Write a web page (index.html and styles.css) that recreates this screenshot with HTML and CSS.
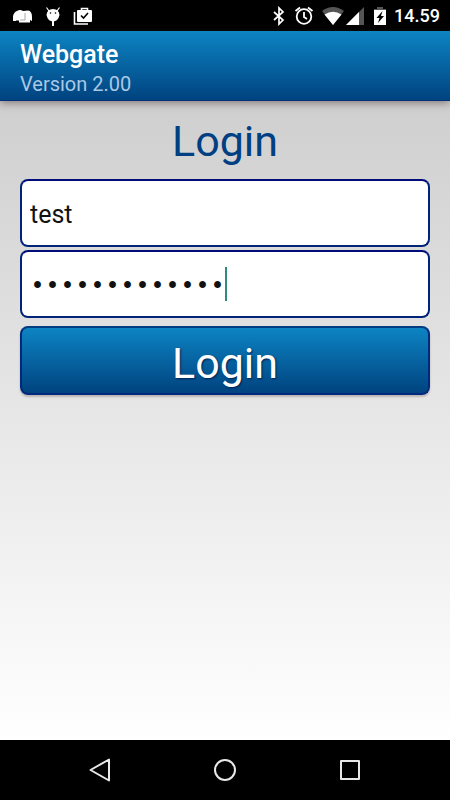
FILE: index.html
```html
<!DOCTYPE html>
<html lang="en">
<head>
  <meta charset="utf-8">
  <meta name="viewport" content="width=device-width, initial-scale=1">
  <title>Webgate</title>
  <link rel="stylesheet" href="styles.css">
</head>
<body>
  <div class="status">
    <svg width="20" height="20" viewBox="0 0 20 20" aria-hidden="true">
      <path d="M0 15Q-1 7 4 5Q7 3 10 5L15 4.500Q19 5 19 11V15L17 14V16.500H6V14.500H3V15Z" fill="#fff"/>
      <path d="M12 7V14H7" fill="none" stroke="#aaa"/>
    </svg>
    <svg width="20" height="20" viewBox="0 0 20 20" aria-hidden="true">
      <path d="M3.500 1.500L6 5M16.500 1.500L14 5" stroke="#fff" stroke-width="1.200"/>
      <path d="M3.500 9Q4 3 10 3T16.500 9Q15 15.500 10 15.500T3.500 9Z" fill="#fff"/>
      <path d="M10 15V20" stroke="#fff" stroke-width="2"/>
      <circle cx="7.500" cy="7" r=".8"/><circle cx="12.500" cy="7" r=".8"/>
    </svg>
    <svg width="20" height="20" viewBox="0 0 20 20" aria-hidden="true">
      <path d="M1.500 6V18H15" fill="none" stroke="#fff" stroke-width="1.600"/>
      <path d="M8.500 5V2.500H14.500V5" fill="none" stroke="#fff" stroke-width="1.600"/>
      <rect x="4" y="4" width="15" height="12" rx="1" fill="#fff"/>
      <path d="M8 9.500L10.500 12L15 7" fill="none" stroke="#000" stroke-width="1.600"/>
    </svg>
    <div class="status-right">
      <svg width="14" height="20" viewBox="0 0 14 20" aria-hidden="true">
        <path d="M2 6L11 14L7 18V2L11 6L2 14" fill="none" stroke="#fff" stroke-width="1.700"/>
      </svg>
      <svg width="20" height="20" viewBox="0 0 20 20" aria-hidden="true">
        <g fill="none" stroke="#fff" stroke-width="1.800">
          <circle cx="10" cy="10.500" r="7.300"/>
          <path d="M10 6V11L13 13M1.500 5L6 1.500M18.500 5L14 1.500"/>
        </g>
      </svg>
      <div class="signals">
        <svg width="22" height="20" viewBox="0 0 22 20" aria-hidden="true">
          <path d="M0 5Q11-3 22 5L11 19Z" fill="#555"/>
          <path d="M2.500 8.500Q11 3 19.500 8.500L11 19Z" fill="#fff"/>
        </svg>
        <svg width="18" height="20" viewBox="0 0 18 20" aria-hidden="true">
          <path d="M18 1V19H0Z" fill="#555"/>
          <path d="M13 6V19H0Z" fill="#fff"/>
        </svg>
      </div>
      <svg class="battery" width="12" height="20" viewBox="0 0 12 20" aria-hidden="true">
        <path d="M3 1H9V3H12V5H0V3H3Z" fill="#555"/>
        <path d="M0 4H12V19H0Z" fill="#fff"/>
        <path d="M8.500 5L2.500 12H5.500L4 17L10 10H7Z"/>
      </svg>
      <span class="clock">14.59</span>
    </div>
  </div>
  <header class="header">
    <h1 class="app-name">Webgate</h1>
    <p class="version">Version 2.00</p>
  </header>
  <main class="main">
    <h2 class="title">Login</h2>
    <form class="form">
      <input class="field" type="text" aria-label="User name" value="test">
      <div class="password">
        <input class="field field-password" type="password" aria-label="Password" value="testpassword1">
        <span class="caret"></span>
      </div>
      <button class="submit" type="button">Login</button>
    </form>
  </main>
  <nav class="nav">
    <button class="nav-button" type="button" aria-label="Back">
      <svg width="24" height="24" viewBox="0 0 24 24"><path d="M21 1.500V22.500L2.500 12Z"/></svg>
    </button>
    <button class="nav-button" type="button" aria-label="Home">
      <svg width="24" height="24" viewBox="0 0 24 24"><circle cx="12" cy="12" r="10"/></svg>
    </button>
    <button class="nav-button" type="button" aria-label="Recent apps">
      <svg width="24" height="24" viewBox="0 0 24 24"><rect x="3" y="3" width="18" height="18"/></svg>
    </button>
  </nav>
</body>
</html>
```
FILE: styles.css
```css
* {
  box-sizing: border-box;
}

body {
  margin: 0;
  min-height: 100vh;
  display: flex;
  flex-direction: column;
  font-family: Roboto, "Liberation Sans", sans-serif;
  background: #000;
}

.status {
  height: 31px;
  display: flex;
  align-items: center;
  gap: 10px;
  padding: 1px 10px 0 13px;
  color: #fff;
}

.status svg {
  display: block;
}

.status-right {
  margin-left: auto;
  display: flex;
  align-items: center;
  gap: 8px;
}

.signals {
  display: flex;
  gap: 2px;
}

.battery {
  margin-left: 2px;
}

.clock {
  font-size: 18px;
  line-height: 22px;
  font-weight: 500;
}

.header {
  position: relative;
  padding: 8px 20px 3px;
  background: linear-gradient(#0d84c3, #00437f);
  border-bottom: 1px solid #00307c;
  box-shadow: 0 2px 8px rgba(60, 40, 40, 0.5);
}

.app-name {
  margin: 0;
  color: #fff;
  font-size: 25px;
  line-height: 32px;
  font-weight: 500;
}

.version {
  margin: 0;
  color: #a9c8e6;
  font-size: 20px;
  line-height: 26px;
}

.main {
  flex: 1;
  padding: 14px 20px;
  background: linear-gradient(#cfcfcf, #fff);
}

.title {
  margin: 0 0 12px;
  color: #003f82;
  font-size: 43px;
  line-height: 52px;
  font-weight: 400;
  text-align: center;
}

.form {
  display: flex;
  flex-direction: column;
}

.field {
  display: block;
  width: 100%;
  height: 68px;
  padding: 2px 8px 0;
  border: 2px solid #00237a;
  border-top-color: #000c78;
  border-radius: 8px;
  background: #fff;
  color: #111;
  font-family: inherit;
  font-size: 25px;
  outline: none;
}

.password {
  position: relative;
  margin: 3px 0 8px;
}

.field-password {
  padding-top: 4px;
  font-family: "Liberation Mono", monospace;
}

.caret {
  position: absolute;
  left: 205px;
  top: 17px;
  width: 2px;
  height: 34px;
  background: #2f8c80;
}

.submit {
  height: 69px;
  padding: 4px 0 0;
  border: 2px solid #00287c;
  border-top-color: #003c80;
  border-radius: 8px;
  background: linear-gradient(#0d84c3, #00437f);
  box-shadow: 0 2px 2px rgba(60, 40, 40, 0.25);
  color: #fff;
  font-family: inherit;
  font-size: 43px;
  line-height: 52px;
  text-shadow: 1px 1px 2px #002050;
}

.nav {
  height: 60px;
  padding: 0 38px;
  display: grid;
  grid-template-columns: repeat(3, 1fr);
  place-items: center;
}

.nav-button {
  display: flex;
  padding: 0;
  border: 0;
  background: none;
}

.nav-button svg {
  fill: none;
  stroke: #e8e8e8;
  stroke-width: 2;
  stroke-linejoin: round;
}
```
